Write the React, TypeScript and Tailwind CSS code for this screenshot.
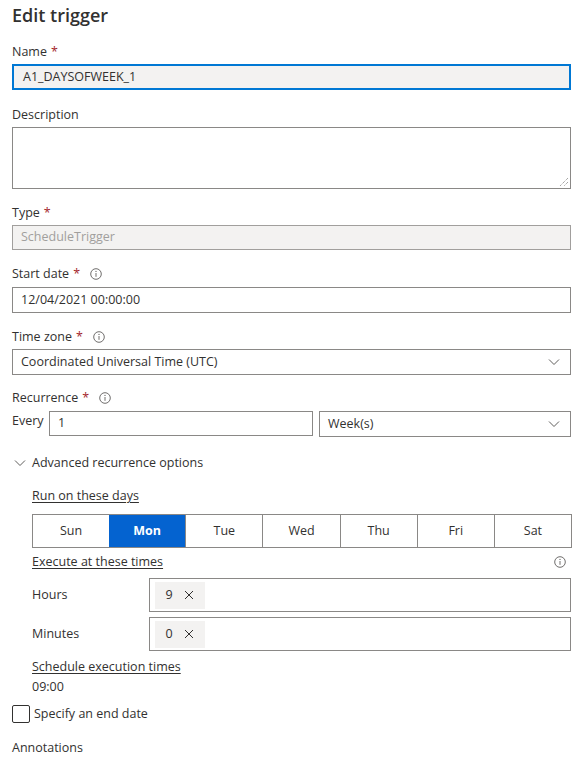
import React from "react";

const font = { fontFamily: '"Open Sans", "Noto Sans", Arial, sans-serif' };

function Info({ className = "" }: { className?: string }) {
  return (
    <svg width="12" height="12" viewBox="0 0 12 12" className={className}>
      <circle cx="6" cy="6" r="5.3" fill="none" stroke="#605e5c" strokeWidth="0.9" />
      <line x1="6" y1="5" x2="6" y2="8.8" stroke="#605e5c" strokeWidth="0.9" />
      <circle cx="6" cy="3.4" r="0.6" fill="#605e5c" />
    </svg>
  );
}

function Chevron() {
  return (
    <svg width="12" height="8" viewBox="0 0 12 8">
      <polyline points="1,1.5 6,6.5 11,1.5" fill="none" stroke="#605e5c" strokeWidth="1" />
    </svg>
  );
}

function Label({ text, required, info }: { text: string; required?: boolean; info?: boolean }) {
  return (
    <div className="flex h-5 items-center text-[12.5px] text-[#323130]">
      <span>{text}</span>
      {required && <span className="ml-[4px] text-[#a4262c]">*</span>}
      {info && <Info className="ml-[10px]" />}
    </div>
  );
}

function Chip({ value }: { value: string }) {
  return (
    <div className="flex h-[27px] items-center gap-[11px] bg-[#f3f2f1] px-[11px] text-[12.5px] text-[#323130]">
      <span>{value}</span>
      <svg width="10" height="10" viewBox="0 0 10 10">
        <path d="M1 1L9 9M9 1L1 9" stroke="#323130" strokeWidth="1" />
      </svg>
    </div>
  );
}

const days = ["Sun", "Mon", "Tue", "Wed", "Thu", "Fri", "Sat"];

export default function App() {
  return (
    <div style={font} className="w-[587px] h-[766px] overflow-hidden bg-white pl-3 pr-4 pt-[3px] text-[#323130]">
      <h1 className="h-6 text-[18px] font-semibold leading-6 text-[#323130]">Edit trigger</h1>

      <div className="mt-[15px]">
        <Label text="Name" required />
        <div className="mt-[2px] flex h-[26px] items-center border-2 border-[#0078d4] bg-[#f3f2f1] px-[9px] text-[12.5px]">
          A1_DAYSOFWEEK_1
        </div>
      </div>

      <div className="mt-[15px]">
        <Label text="Description" />
        <div className="relative mt-[2px] h-[62px] border border-[#8a8886]">
          <svg width="10" height="10" viewBox="0 0 10 10" className="absolute bottom-[1px] right-[1px]">
            <path d="M9 1L1 9M9 5L5 9" stroke="#605e5c" strokeWidth="0.8" strokeDasharray="1 1" />
          </svg>
        </div>
      </div>

      <div className="mt-[14px]">
        <Label text="Type" required />
        <div className="mt-[2px] flex h-[25px] items-center border border-[#a19f9d] bg-[#f3f2f1] px-[8px] text-[12.5px] text-[#a19f9d]">
          ScheduleTrigger
        </div>
      </div>

      <div className="mt-[14px]">
        <Label text="Start date" required info />
        <div className="mt-[3px] flex h-[26px] items-center border border-[#8a8886] px-[8px] text-[12.5px]">
          12/04/2021 00:00:00
        </div>
      </div>

      <div className="mt-[14px]">
        <Label text="Time zone" required info />
        <div className="mt-[2px] flex h-[26px] items-center justify-between border border-[#8a8886] pl-[8px] pr-[10px] text-[12.5px]">
          <span>Coordinated Universal Time (UTC)</span>
          <Chevron />
        </div>
      </div>

      <div className="mt-[13px]">
        <Label text="Recurrence" required info />
        <div className="mt-[3px] flex items-start">
          <span className="w-[37px] text-[12.5px] leading-5">Every</span>
          <div className="flex h-[25px] w-[264px] items-center border border-[#8a8886] px-[8px] text-[12.5px]">1</div>
          <div className="ml-[6px] flex h-[26px] flex-1 items-center justify-between border border-[#8a8886] pl-[8px] pr-[10px] text-[12.5px]">
            <span>Week(s)</span>
            <Chevron />
          </div>
        </div>
      </div>

      <div className="mt-[16px] flex h-5 items-center text-[12.5px]">
        <span className="ml-[2px] w-[18px]">
          <Chevron />
        </span>
        <span>Advanced recurrence options</span>
      </div>

      <div className="ml-5 w-[540px]">
        <div className="mt-[13px] h-5 text-[12.5px] leading-5 underline underline-offset-2">Run on these days</div>
        <div className="mt-[8px] flex h-[34px] border border-[#8a8886]">
          {days.map((d, i) => (
            <div
              key={d}
              className={
                d === "Mon"
                  ? "flex flex-1 items-center justify-center bg-[#0463d0] text-[12.5px] font-bold text-white"
                  : "flex flex-1 items-center justify-center text-[12.5px] text-[#323130] " +
                    (i > 0 ? "border-l border-[#8a8886]" : "")
              }
            >
              {d}
            </div>
          ))}
        </div>
        <div className="mt-[4px] flex h-5 items-center justify-between text-[12.5px]">
          <span className="underline underline-offset-2">Execute at these times</span>
          <Info className="mr-[6px]" />
        </div>
      </div>

      <div className="ml-5">
        <div className="mt-[6px] flex items-center">
          <span className="w-[119px] text-[12.5px]">Hours</span>
          <div className="flex h-[34px] w-[431px] items-center border border-[#8a8886] px-[5px]">
            <Chip value="9" />
          </div>
        </div>
        <div className="mt-[5px] flex items-center">
          <span className="w-[119px] text-[12.5px]">Minutes</span>
          <div className="flex h-[34px] w-[431px] items-center border border-[#8a8886] px-[5px]">
            <Chip value="0" />
          </div>
        </div>
        <div className="mt-[6px] h-5 text-[12.5px] leading-5 underline underline-offset-2">Schedule execution times</div>
        <div className="h-5 text-[12.5px] leading-5">09:00</div>
      </div>

      <div className="mt-[8px] flex items-center">
        <div className="h-[18px] w-[18px] rounded-[2px] border border-[#323130]" />
        <span className="ml-[4px] text-[12.5px]">Specify an end date</span>
      </div>

      <div className="mt-[14px] h-5 text-[12.5px] leading-5">Annotations</div>
    </div>
  );
}
